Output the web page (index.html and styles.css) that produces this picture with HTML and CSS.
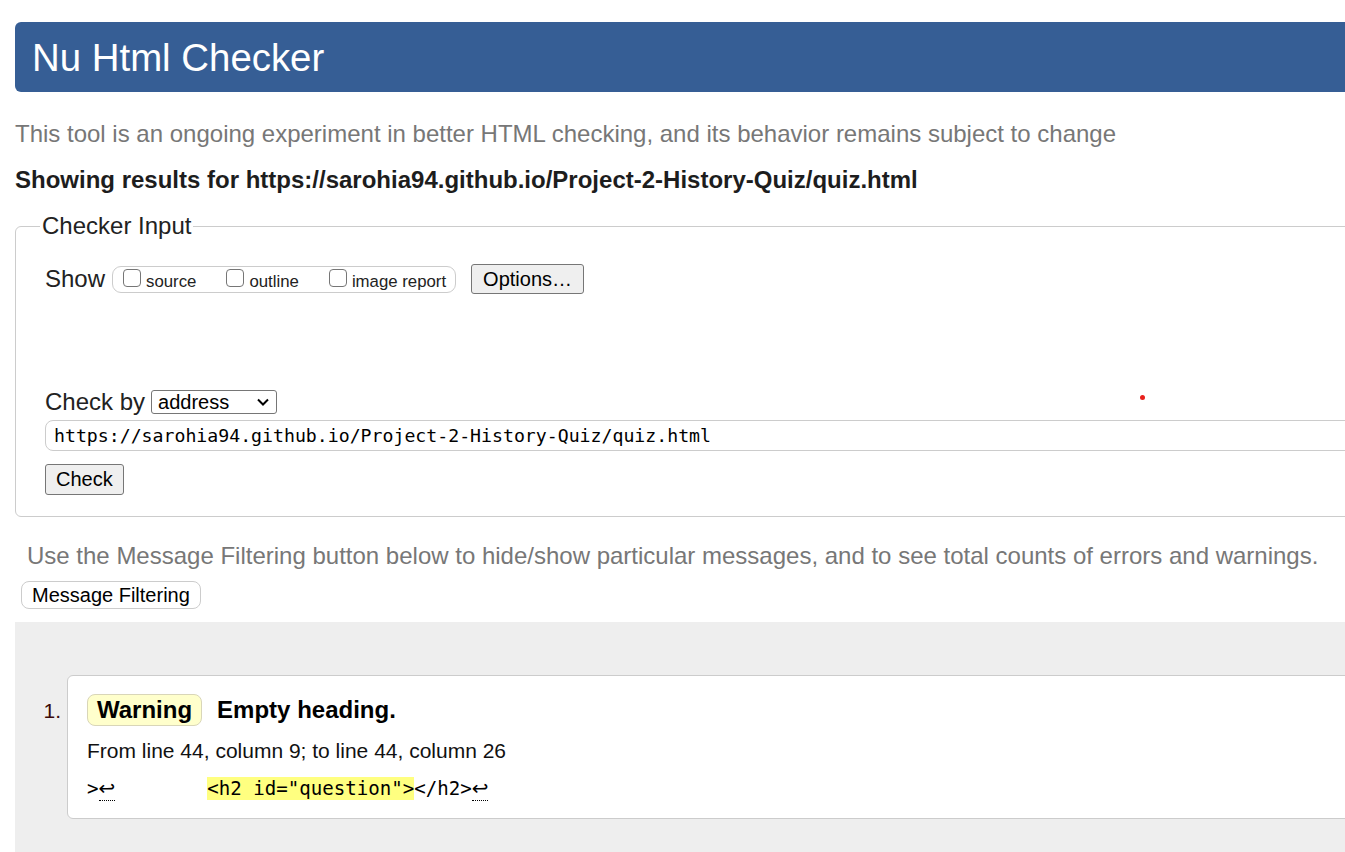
FILE: index.html
```html
<!DOCTYPE html>
<html lang="en">
<head>
<meta charset="utf-8">
<title>Showing results for https://sarohia94.github.io/Project-2-History-Quiz/quiz.html - Nu Html Checker</title>
<link rel="stylesheet" href="styles.css">
</head>
<body>
<div class="page">
  <header class="masthead"><h1 class="title">Nu Html Checker</h1></header>
  <p class="intro">This tool is an ongoing experiment in better HTML checking, and its behavior remains subject to change</p>
  <p class="showing">Showing results for https://sarohia94.github.io/Project-2-History-Quiz/quiz.html</p>
  <form class="form">
    <fieldset class="checker">
      <legend class="legend">Checker Input</legend>
      <div class="show-row">
        <span class="row-label">Show</span>
        <span class="group">
          <label class="opt"><input class="box" type="checkbox">source</label>
          <label class="opt"><input class="box" type="checkbox">outline</label>
          <label class="opt"><input class="box" type="checkbox">image report</label>
        </span>
        <button type="button" class="btn options">Options…</button>
      </div>
      <div class="checkby-row">
        <span class="row-label">Check by</span>
        <span class="select-wrap">
          <select class="select"><option>address</option></select>
          <svg class="chev" width="12" height="8" viewBox="0 0 12 8"><path d="M1 1.5 L6 6.5 L11 1.5" fill="none" stroke="#000" stroke-width="2"/></svg>
        </span>
      </div>
      <input class="url" type="text" value="https://sarohia94.github.io/Project-2-History-Quiz/quiz.html">
      <button type="button" class="btn check">Check</button>
    </fieldset>
  </form>
  <p class="filter-note">Use the Message Filtering button below to hide/show particular messages, and to see total counts of errors and warnings.</p>
  <button type="button" class="filter-btn">Message Filtering</button>
  <div class="results">
    <ol class="messages">
      <li class="msg">
        <span class="num">1.</span>
        <div class="card">
          <p class="msg-head"><strong class="badge">Warning</strong><span class="msg-text">Empty heading.</span></p>
          <p class="location">From line 44, column 9; to line 44, column 26</p>
          <p class="extract"><code class="code">&gt;<b class="lf">↩</b>        <b class="hl">&lt;h2 id="question"&gt;</b>&lt;/h2&gt;<b class="lf">↩</b></code></p>
        </div>
      </li>
    </ol>
  </div>
  <span class="dot"></span>
</div>
</body>
</html>
```

FILE: styles.css
```css
html, body {
  margin: 0;
  padding: 0;
  overflow: hidden;
  background: #fff;
}
body {
  font-family: "Liberation Sans", Arial, sans-serif;
  color: #222;
}
.page {
  position: relative;
  width: 1400px;
  padding: 22px 0 0 15px;
}
.masthead {
  height: 70px;
  background: #365e95;
  border-radius: 6px 0 0 6px;
}
.title {
  margin: 0;
  padding-left: 17px;
  font-size: 38.4px;
  font-weight: normal;
  line-height: 71px;
  color: #fff;
}
.intro {
  margin: 28px 0 0;
  font-size: 24px;
  line-height: 28px;
  color: #777;
}
.showing {
  margin: 18px 0 0;
  font-size: 24px;
  line-height: 28px;
  font-weight: bold;
  color: #1d1d1d;
}
.form {
  margin: 18px 0 0;
}
.checker {
  margin: 0;
  padding: 24px 0 21px 24px;
  border: 1px solid #ccc;
  border-radius: 6px 0 0 6px;
  min-width: 0;
}
.legend {
  padding: 0 2px;
  font-size: 24px;
  line-height: 28px;
  color: #222;
}
.show-row {
  display: flex;
  align-items: center;
  margin-left: 5px;
  height: 30px;
}
.row-label {
  font-size: 24px;
  line-height: 28px;
  color: #222;
}
.group {
  display: flex;
  align-items: center;
  gap: 30px;
  height: 27px;
  box-sizing: border-box;
  margin-left: 7px;
  padding: 0 9px 0 10px;
  border: 1px solid #ccc;
  border-radius: 9px;
}
.opt {
  display: inline-flex;
  align-items: baseline;
  gap: 5px;
  font-size: 16.8px;
  line-height: 20px;
  color: #222;
  position: relative;
  top: 1px;
}
.box {
  appearance: none;
  -webkit-appearance: none;
  display: inline-block;
  width: 18px;
  height: 18px;
  margin: 0 0 2px 0;
  box-sizing: border-box;
  border: 1px solid #767676;
  border-radius: 4px;
  background: #fff;
}
.btn {
  font-family: "Liberation Sans", Arial, sans-serif;
  font-size: 20px;
  color: #000;
  background: #efefef;
  border: 1px solid #767676;
  border-radius: 3px;
  margin: 0;
}
.options {
  margin-left: 15px;
  padding: 0 11px;
  line-height: 28px;
}
.checkby-row {
  display: flex;
  align-items: center;
  gap: 6px;
  margin: 94px 0 0 5px;
  height: 28px;
}
.select-wrap {
  position: relative;
  display: inline-block;
}
.select {
  appearance: none;
  -webkit-appearance: none;
  display: block;
  width: 126px;
  height: 24px;
  box-sizing: border-box;
  padding: 0 0 0 6px;
  font-family: "Liberation Sans", Arial, sans-serif;
  font-size: 20px;
  line-height: 22px;
  color: #000;
  background: #fff;
  border: 1px solid #767676;
  border-radius: 3px;
}
.chev {
  position: absolute;
  left: 106px;
  top: 8px;
  pointer-events: none;
}
.url {
  display: block;
  margin: 4px 0 0 5px;
  width: 1380px;
  height: 31px;
  box-sizing: border-box;
  padding: 0 8px;
  font-family: "DejaVu Sans Mono", "Liberation Mono", monospace;
  font-size: 18.2px;
  color: #000;
  border: 1px solid #ccc;
  border-radius: 8px;
  background: #fff;
}
.check {
  display: block;
  margin: 13px 0 0 5px;
  padding: 0 10px;
  line-height: 29px;
}
.filter-note {
  margin: 25px 0 0 12px;
  font-size: 24px;
  line-height: 28px;
  color: #777;
}
.filter-btn {
  display: block;
  margin: 11px 0 0 6px;
  padding: 0 10px;
  font-family: "Liberation Sans", Arial, sans-serif;
  font-size: 20px;
  line-height: 26px;
  color: #000;
  background: #fff;
  border: 1px solid #ccc;
  border-radius: 8px;
}
.results {
  margin-top: 13px;
  padding: 53px 0 60px 0;
  background: #eee;
}
.messages {
  margin: 0;
  padding: 0;
  list-style: none;
}
.msg {
  display: flex;
  align-items: flex-start;
}
.num {
  width: 52px;
  box-sizing: border-box;
  padding: 23px 6px 0 0;
  text-align: right;
  font-size: 21px;
  line-height: 26px;
  color: #3a0a0a;
}
.card {
  flex: 1;
  padding: 18px 0 15px 19px;
  background: #fff;
  border: 1px solid #ccc;
  border-radius: 6px 0 0 6px;
}
.msg-head {
  display: flex;
  align-items: center;
  margin: 0;
  font-size: 24px;
  line-height: 28px;
  color: #000;
}
.badge {
  padding: 1px 9px;
  background: #ffffcc;
  border: 1px solid #d9d6b8;
  border-radius: 8px;
}
.msg-text {
  margin-left: 15px;
  font-weight: bold;
}
.location {
  margin: 12px 0 0;
  font-size: 21px;
  line-height: 26px;
  color: #111;
}
.extract {
  margin: 12px 0 0;
  line-height: 26px;
}
.code {
  font-family: "DejaVu Sans Mono", "Liberation Mono", monospace;
  font-size: 19.1px;
  white-space: pre;
  color: #000;
}
.lf {
  font-family: "DejaVu Sans", sans-serif;
  font-size: 20px;
  line-height: 1;
  font-weight: normal;
  border-bottom: 1px dotted #000;
}
.hl {
  font-weight: normal;
  background: #ffff80;
}
.dot {
  position: absolute;
  left: 1140px;
  top: 395px;
  width: 5px;
  height: 5px;
  border-radius: 50%;
  background: #e8201c;
}
```
